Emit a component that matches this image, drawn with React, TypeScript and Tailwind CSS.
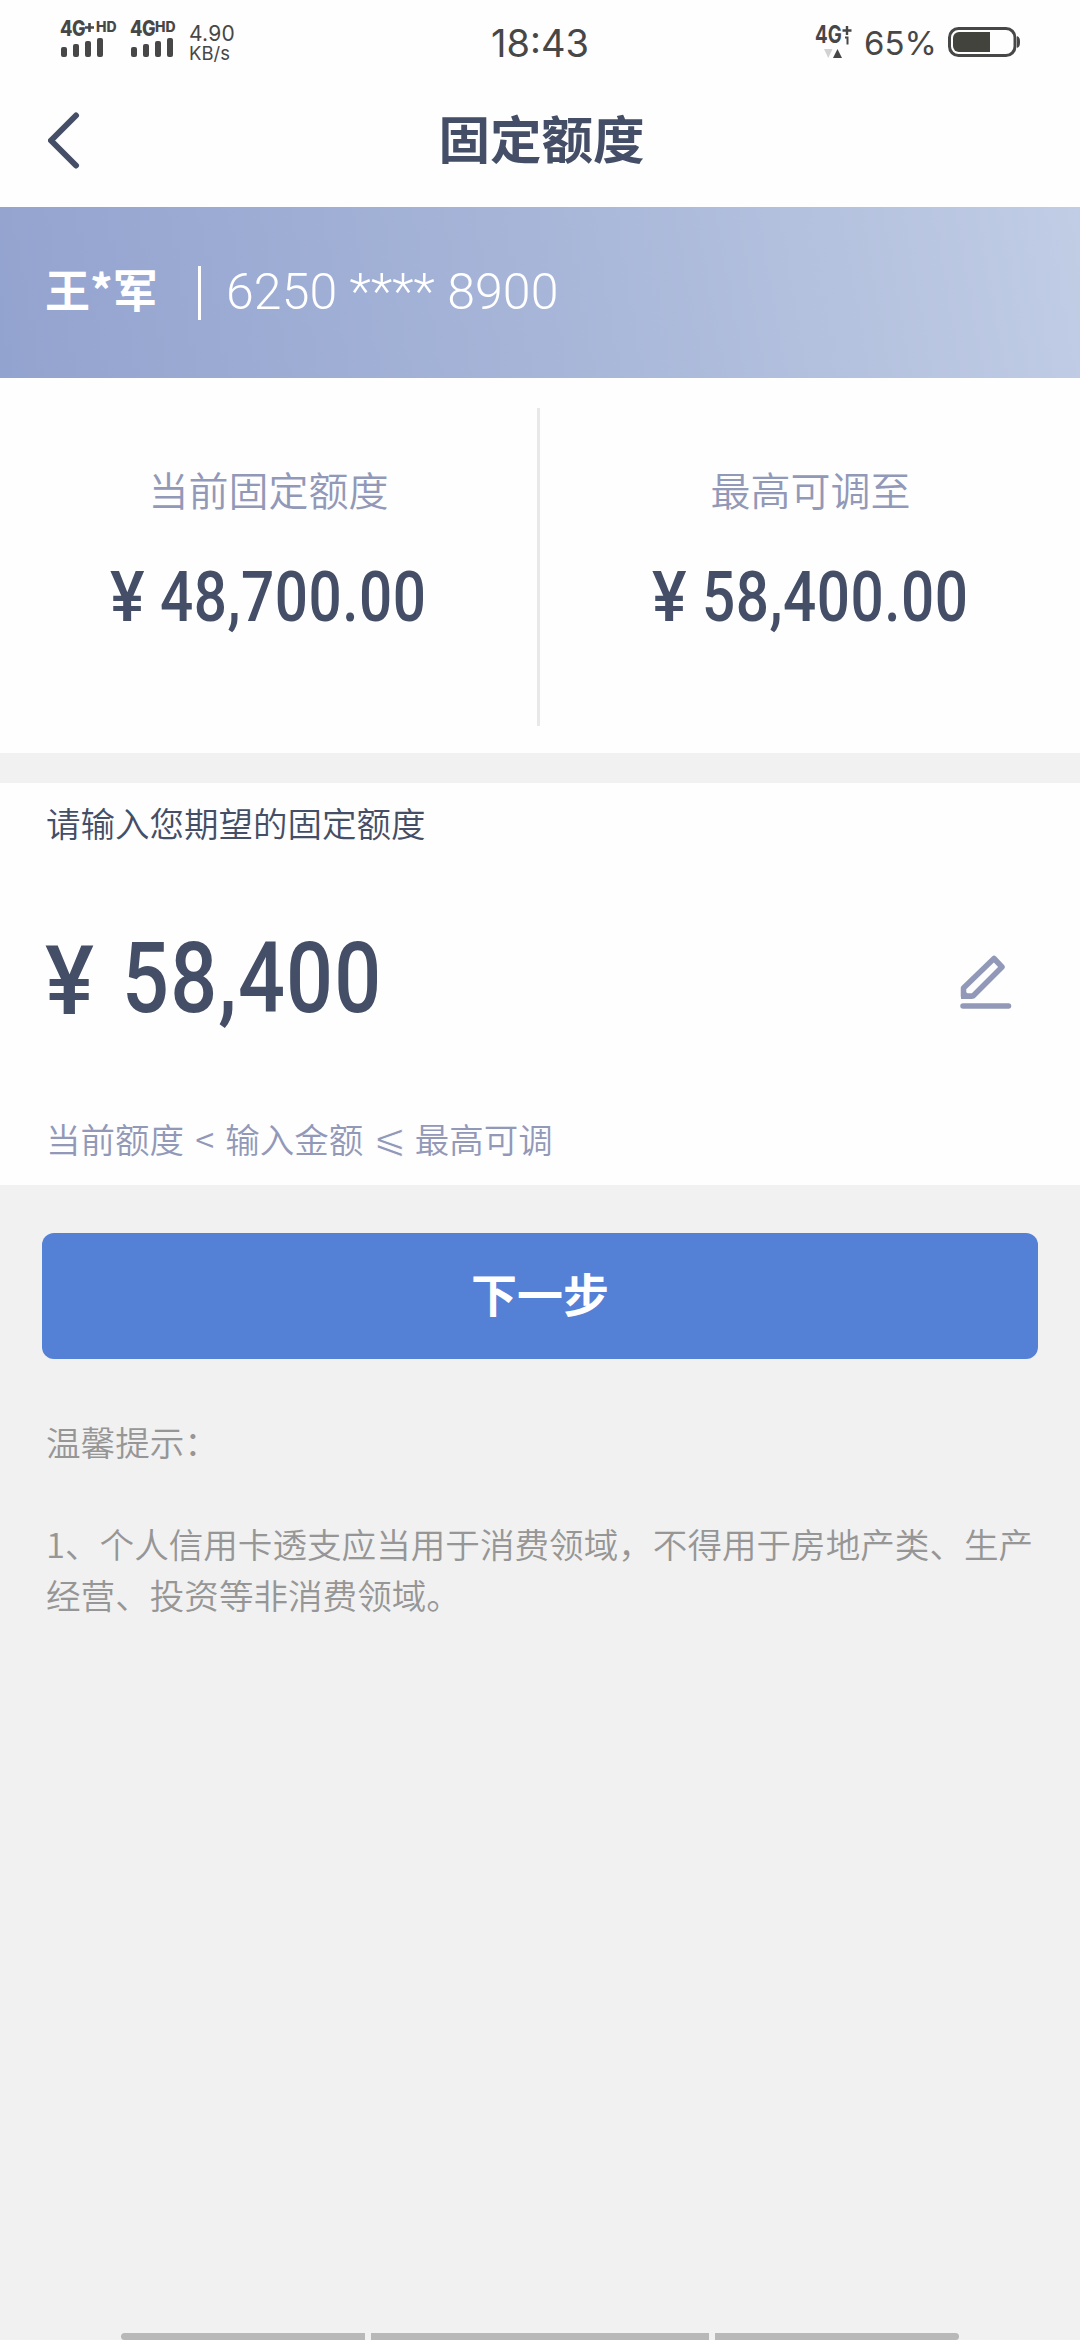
import { ReactNode } from "react";

const LATIN_SANS = "font-['Inter','Noto_Sans_CJK_SC',sans-serif]";

function SignalBars() {
  return (
    <div className="flex items-end gap-1.5 pl-px h-5">
      <i className="w-1.5 h-[10px] rounded-[2px] bg-[#474747]" />
      <i className="w-1.5 h-[13px] rounded-[2px] bg-[#474747]" />
      <i className="w-1.5 h-4 rounded-[2px] bg-[#474747]" />
      <i className="w-1.5 h-[19px] rounded-[2px] bg-[#474747]" />
    </div>
  );
}

function StatusBar() {
  return (
    <div className={`flex h-[84px] text-[#474747] ${LATIN_SANS}`}>
      <div className="flex w-[490px] shrink-0 pl-[60px] pt-[21px]">
        <div className="w-[70px]">
          <div className="flex h-4 items-start font-extrabold leading-none">
            <span className="origin-top-left scale-x-[0.86] w-[25px] text-[21px] leading-4 tracking-[-0.5px]">4G</span>
            <svg className="mt-0.5 size-[9px] shrink-0" viewBox="0 0 9 9" stroke="#474747" strokeWidth="2.6">
              <path d="M4.5 0v9M0 4.5h9" />
            </svg>
            <span className="ml-[2px] text-[14px] leading-[11px]">HD</span>
          </div>
          <SignalBars />
        </div>
        <div className="w-[59px]">
          <div className="flex h-4 items-start font-extrabold leading-none">
            <span className="origin-top-left scale-x-[0.86] w-[25px] text-[21px] leading-4 tracking-[-0.5px]">4G</span>
            <span className="text-[14px] leading-[11px]">HD</span>
          </div>
          <SignalBars />
        </div>
        <div className="pt-[3px]">
          <div className="text-[21px] leading-[20px] tracking-[0.2px]">4.90</div>
          <div className="text-[18.5px] leading-[19px]">KB/s</div>
        </div>
      </div>
      <div className="w-[100px] pt-[20px] text-center text-[38px] leading-[46px] whitespace-nowrap">18:43</div>
      <div className="flex w-[490px] shrink-0 pl-[225px] pt-[25px]">
        <div className="w-[49px]">
          <div className="flex h-[20px] items-start">
            <span className="origin-left scale-x-[0.78] w-[27px] text-[24px] font-bold leading-5">4G</span>
            <svg className="mt-px h-[19px] w-[10px] shrink-0" viewBox="0 0 10 19" fill="none" stroke="#474747" strokeWidth="2.4">
              <path d="M5 0v9M0.5 4.5h9" />
              <path d="M3 11.5h2.5v7" strokeWidth="2" />
            </svg>
          </div>
          <svg className="ml-[9px] mt-1 h-[9px] w-[18px]" viewBox="0 0 18 9">
            <path d="M0 0h8.500L4.250 9z" fill="#d2d2d2" />
            <path d="M9 9h9L13.500 0z" fill="#474747" />
          </svg>
        </div>
        <div className="w-[84px] whitespace-nowrap text-[33px] leading-[37px]">65%</div>
        <svg className="mt-0.5 h-[30px] w-[72px]" viewBox="0 0 72 30">
          <rect x="1.500" y="1.500" width="65.500" height="27" rx="9" fill="none" stroke="#474747" strokeWidth="3" />
          <path d="M42 5v20H11a6 6 0 0 1-6-6v-8a6 6 0 0 1 6-6z" fill="#42433d" />
          <path d="M69 9c2 1 3 2 3 6s-1 5-3 6z" fill="#474747" />
        </svg>
      </div>
    </div>
  );
}

function LimitColumn({ label, children }: { label: string; children: ReactNode }) {
  return (
    <div className="w-[537px] pt-[82px]">
      <div className="text-center text-[40px] font-[350] leading-[58px] text-[#9299b8]">{label}</div>
      <div className="mt-[37px] flex h-[84px] items-center pl-[110px] font-['Roboto',sans-serif] text-[70px] font-medium leading-none text-[#444e67]">
        <span className="w-[50px] origin-left scale-x-[0.93]">¥</span>
        <span className="origin-left scale-x-[0.835] whitespace-nowrap tracking-[0.6px]">{children}</span>
      </div>
    </div>
  );
}

function EditIcon() {
  return (
    <svg className="mt-2 h-[55px] w-[52px]" viewBox="0 0 52 55" fill="none" stroke="#9299b8" strokeWidth="5.500">
      <path d="M3.500 41V33L34 3.500L42 12L13 41Z" strokeLinejoin="round" />
      <path d="M1 32v12h12z" fill="#9299b8" stroke="none" />
      <path d="M3 51h45.500" strokeLinecap="round" />
    </svg>
  );
}

export default function App() {
  return (
    <div className="flex h-[2340px] w-[1080px] flex-col overflow-hidden bg-[#f1f1f1] font-['Noto_Sans_CJK_SC',sans-serif]">
      <header className="h-[207px] bg-[#fefefe]">
        <StatusBar />
        <div className="flex h-[112px] items-center">
          <svg className="ml-12 h-[57px] w-8" viewBox="0 0 32 57" fill="none" stroke="#444e67" strokeWidth="6" strokeLinecap="round" strokeLinejoin="round">
            <path d="M28 3.500L3 28.500L28 53.500" />
          </svg>
          <h1 className="mr-[77px] flex-1 pb-1.5 text-center text-[51.5px] font-bold leading-[74px] text-[#444e67]">固定额度</h1>
        </div>
      </header>

      <section className="flex h-[171px] items-center bg-[linear-gradient(80deg,#93a3cf,#a9b7d9_55%,#c1cde5)] pl-[45px] text-white">
        <div className="w-[153px] pb-2 text-[45px] font-bold leading-[66px]">王*军</div>
        <div className="h-[54px] w-[3px] bg-white" />
        <div className="pl-[25px] font-['Roboto',sans-serif] text-[50px] font-[340] tracking-[0.1px]">6250 **** 8900</div>
      </section>

      <section className="flex h-[375px] bg-[#fefefe]">
        <LimitColumn label="当前固定额度">48,700.00</LimitColumn>
        <div className="mr-0.5 mt-[30px] h-[318px] w-[3px] bg-[#e8e8e8]" />
        <LimitColumn label="最高可调至">58,400.00</LimitColumn>
      </section>

      <section className="mt-[30px] h-[402px] bg-[#fefefe] pl-[46px]">
        <div className="pt-[14px] text-[34.5px] font-[350] leading-[50px] text-[#444e67]">请输入您期望的固定额度</div>
        <div className="mt-[79px] flex h-[104px] items-center pr-[68px] font-['Roboto',sans-serif] font-medium leading-none text-[#444e67]">
          <span className="w-[76px] pt-1.5 text-[97px]">
            <span className="inline-block origin-left scale-x-[0.95] -ml-px">¥</span>
          </span>
          <span className="flex-1 text-[99px]">
            <span className="inline-block origin-left scale-x-[0.835] tracking-[1.4px]">58,400</span>
          </span>
          <EditIcon />
        </div>
        <div className="mt-[83px] text-[34.5px] font-[350] leading-[50px] text-[#9299b8] [word-spacing:3.5px]">
          当前额度 &lt; 输入金额{" "}
          <span className="inline-block -translate-y-[3px] scale-[1.15] [-webkit-text-stroke:0.8px_#fefefe]">⩽</span> 最高可调
        </div>
      </section>

      <button className="mx-[42px] mt-[48px] h-[126px] shrink-0 rounded-xl bg-[#5480d6] pb-2 text-[46px] font-bold text-white">下一步</button>

      <section className="mt-[57px] pl-[46px] text-[34.6px] font-[350] leading-[51px] text-[#969696]">
        <p>温馨提示：</p>
        <p className="mt-[51px]">
          1、个人信用卡透支应当用于消费领域，不得用于房地产类、生产
          <br />
          经营、投资等非消费领域。
        </p>
      </section>

      <footer className="mx-[121px] mt-auto flex h-[7px] gap-1.5">
        <div className="w-[244px] rounded-l-md bg-[#b8b8b8]" />
        <div className="flex-1 bg-[#b8b8b8]" />
        <div className="w-[244px] rounded-r-md bg-[#b8b8b8]" />
      </footer>
    </div>
  );
}
